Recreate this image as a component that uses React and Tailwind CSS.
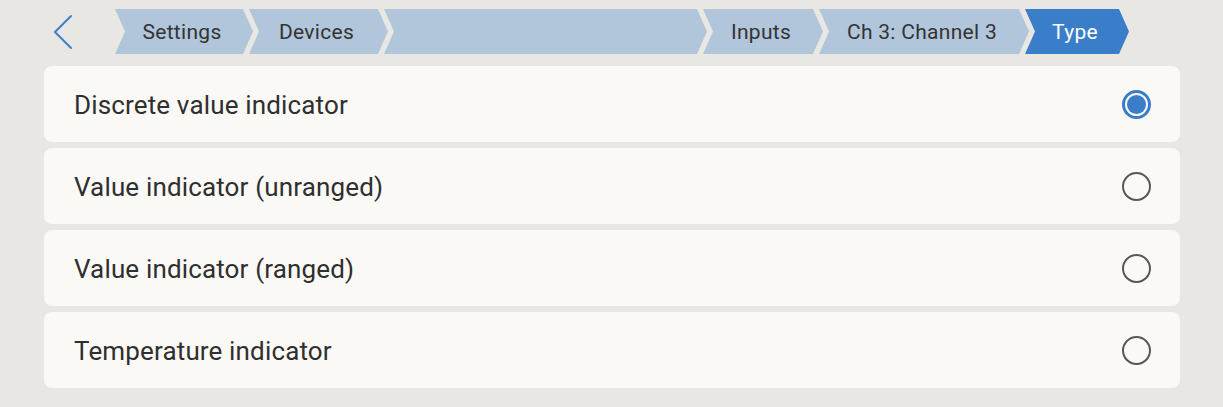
import React, { useState } from 'react';

const crumbs = [
  { label: 'Settings', w: 'w-[138px]' },
  { label: 'Devices', w: 'w-[139px]' },
  { label: '', w: 'w-[323px]' },
  { label: 'Inputs', w: 'w-[120px]' },
  { label: 'Ch 3: Channel 3', w: 'w-[210px]' },
  { label: 'Type', w: 'w-[104px]', active: true },
];

const options = [
  'Discrete value indicator',
  'Value indicator (unranged)',
  'Value indicator (ranged)',
  'Temperature indicator',
];

// one breadcrumb piece: notch on the left, point on the right
const Crumb = ({ label, w, active, first }) => (
  <div
    className={`${w} ${first ? '' : '-ml-[4px]'} h-[45px] flex items-center justify-center pr-[4px] pt-[2px] text-[21px] tracking-[0.3px] [clip-path:polygon(0_0,calc(100%_-_10px)_0,100%_50%,calc(100%_-_10px)_100%,0_100%,10px_50%)] ${
      active ? 'bg-[#3a7ec9] text-white' : 'bg-[#b1c6da] text-[#333333]'
    }`}
  >
    {label}
  </div>
);

const Radio = ({ checked }) =>
  checked ? (
    <span className="w-[29px] h-[29px] rounded-full border-[3px] border-[#3a7ec9] flex items-center justify-center">
      <span className="w-[19px] h-[19px] rounded-full bg-[#3a7ec9]" />
    </span>
  ) : (
    <span className="w-[29px] h-[29px] rounded-full border-[2.5px] border-[#575757]" />
  );

export default function App() {
  const [selected, setSelected] = useState(0);

  return (
    <div className="w-[1223px] h-[407px] bg-[#e8e7e3] font-['Roboto',sans-serif] overflow-hidden">
      {/* Header with back button and breadcrumb */}
      <div className="flex items-center pt-[9px] h-[54px]">
        <button className="ml-[52px] w-[22px] h-[36px] flex items-center justify-center">
          <svg width="22" height="36" viewBox="0 0 22 36" fill="none">
            <polyline points="19,2 3,18 19,34" stroke="#3b82c8" strokeWidth="2" strokeLinecap="round" strokeLinejoin="round" />
          </svg>
        </button>
        <div className="flex ml-[41px]">
          {crumbs.map((c, i) => (
            <Crumb key={i} {...c} first={i === 0} />
          ))}
        </div>
      </div>

      {/* Options */}
      <div className="flex flex-col gap-[6px] mt-[12px] ml-[44px] mr-[43px]">
        {options.map((o, i) => (
          <div
            key={o}
            onClick={() => setSelected(i)}
            className="h-[76px] bg-[#faf9f6] rounded-[8px] flex items-center justify-between pl-[30px] pr-[29px] cursor-pointer"
          >
            <span className="text-[26px] tracking-[0.15px] pt-[3px] text-[#2f2f2f]">{o}</span>
            <Radio checked={selected === i} />
          </div>
        ))}
      </div>
    </div>
  );
}
